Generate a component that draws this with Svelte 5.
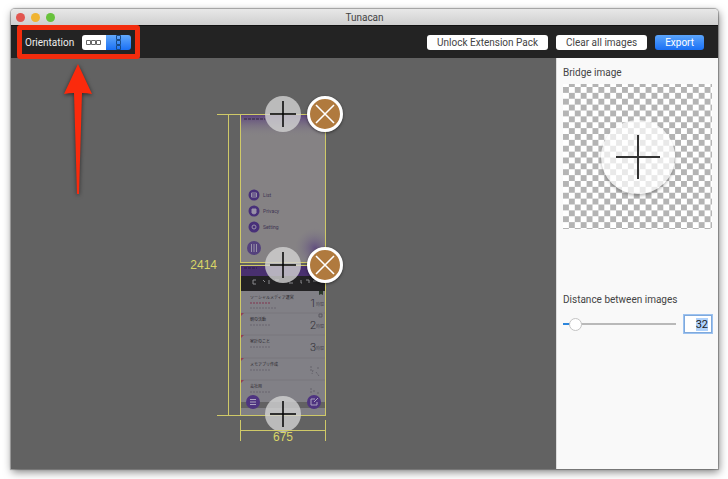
<script lang="ts">
    let orientation = $state('vertical');
    let distance = $state(32);
    const maxDistance = 500;

    const menu = [
        {label: 'List', y: 80},
        {label: 'Privacy', y: 96},
        {label: 'Setting', y: 112},
    ];
    const rows = [
        {y: 25, title: 'ソーシャルメディア運営', unit: '時間', count: '1'},
        {y: 47, title: '朝の活動', unit: '時間', count: '2'},
        {y: 69, title: '家計のこと', unit: '時間', count: '3'},
        {y: 92, title: 'メモアプリ作成', unit: '', count: ''},
        {y: 114, title: '会社用', unit: '', count: ''},
    ];

    function selectAll(node: HTMLInputElement) {
        node.focus();
        node.select();
    }
</script>

{#snippet addButton(label: string, place: string)}
    <button class="add {place}" aria-label={label}>
        <svg viewBox="0 0 36 36"><path d="M18 5V31M5 18H31" stroke="#000" stroke-width="1.5"/></svg>
    </button>
{/snippet}

{#snippet removeButton(label: string)}
    <button class="remove" aria-label={label}>
        <svg viewBox="0 0 36 36">
            <circle cx="18" cy="18" r="16.5" fill="#b07a3e" stroke="#fff" stroke-width="3"/>
            <path d="M9 9L27 27M27 9L9 27" stroke="#fff" stroke-width="1.6"/>
        </svg>
    </button>
{/snippet}

<div class="desktop">
    <div class="window">
        <header class="titlebar">
            <div class="lights">
                <button class="light close" aria-label="Close"></button>
                <button class="light minimize" aria-label="Minimize"></button>
                <button class="light zoom" aria-label="Zoom"></button>
            </div>
            <h1>Tunacan</h1>
        </header>

        <div class="toolbar">
            <span class="orientation-label" id="orientation">Orientation</span>
            <div class="segments" role="group" aria-labelledby="orientation">
                <button class:selected={orientation === 'horizontal'} aria-label="Horizontal"
                        onclick={() => orientation = 'horizontal'}>
                    <svg width="16" height="5" viewBox="0 0 16 5" fill="none" stroke="#666">
                        <path d="M.5 .5H4.5V4.5H.5ZM5.5 .5H9.5V4.5H5.5ZM10.5 .5H14.5V4.5H10.5Z"/>
                    </svg>
                </button>
                <button class:selected={orientation === 'vertical'} aria-label="Vertical"
                        onclick={() => orientation = 'vertical'}>
                    <svg width="5" height="15" viewBox="0 0 5 15" fill="none" stroke="#174a86">
                        <path d="M.5 .5H4.5V4.5H.5ZM.5 5.5H4.5V9.5H.5ZM.5 10.5H4.5V14.5H.5Z"/>
                    </svg>
                </button>
            </div>
            <div class="actions">
                <button>Unlock Extension Pack</button>
                <button>Clear all images</button>
                <button class="primary">Export</button>
            </div>

            <!-- Callout around the orientation switch -->
            <div class="callout"></div>
            <svg class="arrow" width="32" height="136" viewBox="0 0 32 136">
                <path d="M16 2L30 32Q25 31 20 31L17 132H15L12 31Q7 31 2 32Z" fill="#fb2a0c"/>
            </svg>
        </div>

        <div class="content">
            <main class="canvas">
                <div class="stack">
                    <div class="picture">
                        <svg width="84" height="147" viewBox="0 0 84 147">
                            <defs>
                                <linearGradient id="topFade" x2="0" y2="1">
                                    <stop offset="0" stop-color="#5c447c"/>
                                    <stop offset="1" stop-color="#888587" stop-opacity="0"/>
                                </linearGradient>
                                <radialGradient id="glow">
                                    <stop offset="0" stop-color="#635080"/>
                                    <stop offset="1" stop-color="#7d7885" stop-opacity="0"/>
                                </radialGradient>
                            </defs>
                            <rect width="84" height="147" fill="#858284"/>
                            <rect width="84" height="22" fill="url(#topFade)"/>
                            <circle cx="74" cy="133" r="20" fill="url(#glow)"/>
                            <path d="M3 4H24" stroke="#302640" stroke-dasharray="3 1"/>
                            {#each menu as item}
                                <circle cx="13" cy={item.y} r="5.5" fill="#483079"/>
                                <text x="22" y={item.y + 2} class="tiny">{item.label}</text>
                            {/each}
                            <g fill="none" stroke="#9992a8">
                                <path d="M10.5 78H15.5V82H10.5ZM11 80H15"/>
                                <path d="M11 94H15V98L13 99L11 98Z" fill="#9992a8"/>
                                <circle cx="13" cy="112" r="2"/>
                            </g>
                            <circle cx="13" cy="133" r="7" fill="#54417d"/>
                            <path d="M10.5 129V137M13 129V137M15.5 129V137" stroke="#9992a8"/>
                        </svg>
                        {@render addButton('Add image above', 'top')}
                        {@render removeButton('Remove first image')}
                    </div>
                    <div class="picture">
                        <svg width="84" height="149" viewBox="0 0 84 149">
                            <rect width="84" height="149" fill="#818086"/>
                            <rect width="84" height="10" fill="#49306f"/>
                            <path d="M3 2H16" stroke="#2c1f45" stroke-dasharray="3 1"/>
                            <rect y="10" width="84" height="15" fill="#232224"/>
                            <path d="M15 14H12V18H15M22 14L24 16M28 14V18M34 14H38M48 17H52M60 14V17H61M65 14H68V17M72 15H80"
                                  fill="none" stroke="#8a898d"/>
                            {#each rows as row, i}
                                {#if i}
                                    <path d="M0 {row.y}H84" stroke="#78777d"/>
                                    <path d="M0 {row.y}H3L0 {row.y + 3}Z" fill="#903e57"/>
                                {/if}
                                <text x="9" y={row.y + 8} class="row-title">{row.title}</text>
                                <path d="M9 {row.y + 12}H30" stroke={i ? '#69656e' : '#81354f'} stroke-dasharray="2 1"/>
                                <text x="69" y={row.y + 16} class="count">{row.count}</text>
                                <text x="75" y={row.y + 15} class="unit">{row.unit}</text>
                            {/each}
                            <path d="M9 42H36" stroke="#69656e" stroke-dasharray="2 1"/>
                            <path d="M78 25V29L80 28L82 29V25Z" fill="#29372a"/>
                            <path d="M78 48H81V51H78Z" fill="none" stroke="#5a5960"/>
                            <path d="M70 100V105M72 104L71 108M76 102H79M75 106L78 110M70 122V127M72 125H74M76 127H79"
                                  fill="none" stroke="#65636b" stroke-dasharray="2 1"/>
                            <rect y="136" width="84" height="6" fill="#626163"/>
                            <circle cx="12" cy="136" r="7" fill="#4e3480"/>
                            <path d="M9 133.5H15M9 136H15M9 138.5H15" stroke="#aaa2bd"/>
                            <circle cx="73" cy="136" r="7" fill="#4e3480"/>
                            <path d="M74 133H70V139H76V136M73 136L77 132" fill="none" stroke="#aaa2bd"/>
                        </svg>
                        {@render addButton('Add image between', 'top')}
                        {@render removeButton('Remove second image')}
                        {@render addButton('Add image below', 'bottom')}
                    </div>
                    <div class="measure height"><span>2414</span></div>
                    <div class="measure width"><span>675</span></div>
                </div>
            </main>

            <aside class="sidebar">
                <h2>Bridge image</h2>
                <button class="bridge" aria-label="Add bridge image">
                    <svg width="100%" height="145">
                        <defs>
                            <pattern id="checker" width="11.8" height="11.75" y="3" patternUnits="userSpaceOnUse">
                                <rect width="11.8" height="11.75" fill="#fff"/>
                                <path d="M0 0H5.9V5.9H0ZM5.9 5.9H11.8V11.75H5.9Z" fill="#b4b4b4"/>
                            </pattern>
                        </defs>
                        <rect width="100%" height="145" fill="url(#checker)"/>
                    </svg>
                    <span class="bridge-plus">
                        <svg width="74" height="74" viewBox="0 0 74 74">
                            <path d="M37 15V59M15 37H59" stroke="#333" stroke-width="2"/>
                        </svg>
                    </span>
                </button>

                <label for="distance">Distance between images</label>
                <div class="distance">
                    <input type="range" min="0" max={maxDistance} bind:value={distance} aria-label="Distance slider"
                           style="--fill: {distance / maxDistance * 100}%"/>
                    <input id="distance" type="text" bind:value={distance} use:selectAll/>
                </div>
            </aside>
        </div>
    </div>
</div>

<style>
    :global(body) {
        margin: 0;
        background: #fff;
    }

    .desktop {
        box-sizing: border-box;
        display: flex;
        min-height: 100vh;
        padding: 9px 10px 10px 11px;
        font-family: Roboto, "Liberation Sans", sans-serif;
        font-size: 10px;
        color: #444;
    }

    button {
        padding: 0;
        border: 0;
        font: inherit;
        color: inherit;
    }

    svg {
        display: block;
    }

    .window {
        flex: 1;
        display: flex;
        flex-direction: column;
        border-radius: 4px 4px 0 0;
        box-shadow: 0 0 1px 1px rgba(0, 0, 0, 0.3), 1px 3px 8px rgba(0, 0, 0, 0.5);
    }

    .titlebar {
        display: grid;
        grid-template-columns: 1fr auto 1fr;
        align-items: center;
        height: 16px;
        padding: 0 5px;
        border-bottom: 1px solid #111;
        border-radius: 4px 4px 0 0;
        background: linear-gradient(#e8e8e8, #cfcfcf);
    }

    h1, h2 {
        margin: 0;
        font-size: 10px;
        font-weight: 400;
    }

    .lights {
        display: flex;
        gap: 6px;
    }

    .light {
        width: 9px;
        height: 9px;
        border-radius: 50%;
    }

    .close {
        background: #e25650;
    }

    .minimize {
        background: #f0b432;
    }

    .zoom {
        background: #68c23c;
    }

    .toolbar {
        position: relative;
        display: flex;
        align-items: center;
        height: 32px;
        padding: 0 14px;
        background: #232323;
    }

    .orientation-label {
        margin-right: 8px;
        color: #eee;
    }

    .segments {
        display: flex;
        overflow: hidden;
        border-radius: 3px;
    }

    .segments button {
        display: flex;
        align-items: center;
        justify-content: center;
        width: 24px;
        height: 15px;
        background: #fff;
    }

    .segments .selected {
        width: 25px;
        background: linear-gradient(#62a9fb, #1a70f5);
    }

    .actions {
        display: flex;
        gap: 8px;
        margin-left: auto;
    }

    .actions button {
        height: 15px;
        padding: 0 10px;
        border-radius: 3px;
        background: #fff;
        line-height: 15px;
    }

    .actions .primary {
        background: linear-gradient(#5ba5fb, #1a70f5);
        color: #fff;
    }

    .callout {
        position: absolute;
        top: -1px;
        left: 6px;
        width: 113px;
        height: 24px;
        border: 5px solid #f22c0d;
        border-radius: 3px;
        pointer-events: none;
    }

    .arrow {
        position: absolute;
        z-index: 1;
        top: 36px;
        left: 51px;
        filter: drop-shadow(0 1px 2px rgba(0, 0, 0, 0.6));
        pointer-events: none;
    }

    .content {
        flex: 1;
        display: flex;
    }

    .canvas {
        flex: 1;
        display: flex;
        align-items: center;
        justify-content: center;
        padding: 2px 1px 0 0;
        background: #626262;
    }

    .stack {
        position: relative;
        display: flex;
        flex-direction: column;
        gap: 2px;
    }

    .picture {
        position: relative;
        border: 1px solid #cfc968;
    }

    .tiny {
        font-size: 5px;
        fill: #403553;
    }

    .row-title {
        font-family: "Noto Sans CJK JP", sans-serif;
        font-size: 4px;
        fill: #28262c;
    }

    .unit {
        font-family: "Noto Sans CJK JP", sans-serif;
        font-size: 4px;
        fill: #4c4a52;
    }

    .count {
        font-size: 11px;
        font-weight: 300;
        fill: #2f2d35;
    }

    .add, .remove {
        position: absolute;
        width: 36px;
        height: 36px;
        border-radius: 50%;
    }

    .add {
        left: 24px;
        background: rgba(210, 210, 210, 0.8);
    }

    .top, .remove {
        top: -19px;
    }

    .bottom {
        bottom: -17px;
    }

    .remove {
        z-index: 1;
        right: -18px;
        background: none;
        box-shadow: 0 1px 3px rgba(0, 0, 0, 0.5);
    }

    .measure {
        position: absolute;
        display: flex;
        box-sizing: border-box;
        font-family: "Liberation Sans", sans-serif;
        font-size: 12px;
        color: #d9d567;
    }

    .height {
        top: 0;
        bottom: 0;
        right: 86px;
        width: 23px;
        align-items: center;
        justify-content: flex-end;
        border: solid #cfc968;
        border-width: 1px 0;
        background: linear-gradient(#cfc968, #cfc968) 11px 0 / 1px 100% no-repeat;
    }

    .height span {
        margin-right: 23px;
    }

    .width {
        top: 306px;
        left: 0;
        right: 0;
        height: 21px;
        align-items: flex-end;
        justify-content: center;
        border: solid #cfc968;
        border-width: 0 1px;
        background: linear-gradient(#cfc968, #cfc968) 0 10px / 100% 1px no-repeat;
    }

    .width span {
        line-height: 8px;
    }

    .sidebar {
        box-sizing: border-box;
        width: 162px;
        padding: 7px 6px;
        border-left: 1px solid #ddd;
        background: #f9f9f9;
    }

    h2, label {
        display: block;
        line-height: 16px;
    }

    .bridge {
        display: grid;
        width: 100%;
        margin: 3px 0 63px;
        background: none;
    }

    .bridge > * {
        grid-area: 1 / 1;
    }

    .bridge-plus {
        place-self: center;
        border-radius: 50%;
        background: rgba(255, 255, 255, 0.7);
        box-shadow: 0 2px 3px rgba(0, 0, 0, 0.25);
    }

    .distance {
        display: flex;
        align-items: center;
        gap: 8px;
        margin-top: 7px;
    }

    input[type="range"] {
        flex: 1;
        min-width: 0;
        height: 13px;
        margin: 0;
        appearance: none;
        background: linear-gradient(90deg, #2c86dc var(--fill), #b9b9b9 var(--fill)) center / 100% 2px no-repeat;
    }

    input[type="range"]::-webkit-slider-thumb {
        appearance: none;
        box-sizing: border-box;
        width: 13px;
        height: 13px;
        border: 1px solid #c4c4c4;
        border-radius: 50%;
        background: #fff;
    }

    input[type="text"] {
        box-sizing: border-box;
        width: 28px;
        height: 18px;
        margin: 0;
        padding: 0 3px;
        border: 1px solid #7fa9dc;
        outline: 1px solid #9cc2f0;
        background: #fff;
        font: inherit;
        font-size: 11px;
        color: #222;
        text-align: right;
    }

    input[type="text"]::selection {
        background: #b0d2fb;
        color: #222;
    }
</style>
